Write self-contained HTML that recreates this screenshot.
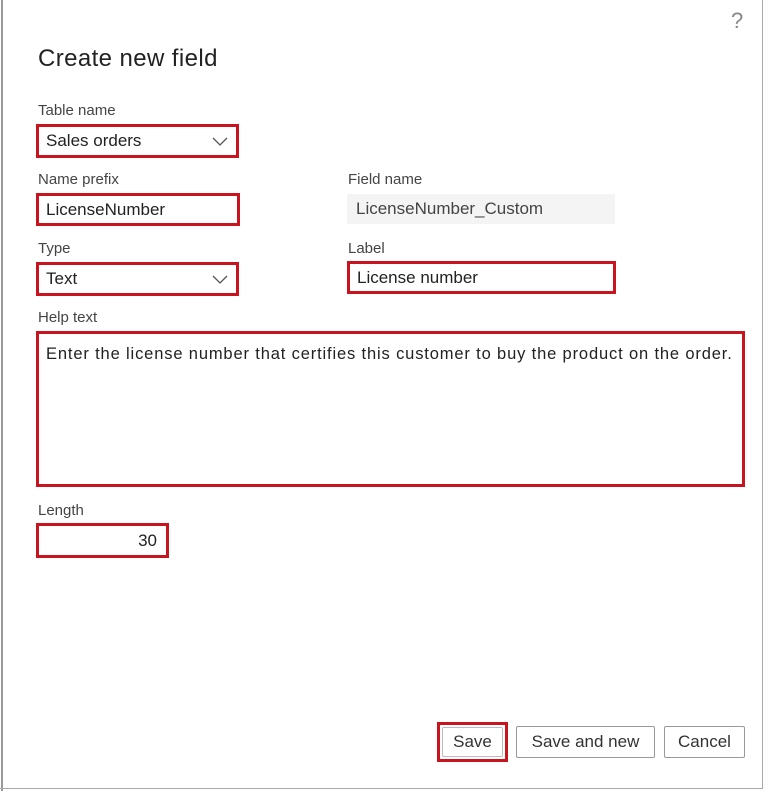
<!DOCTYPE html>
<html><head><style>
body{margin:0;width:768px;height:791px;background:#fff;font-family:"Liberation Sans",sans-serif;color:#222;position:relative;overflow:hidden}
.a{position:absolute}
.lbl{font-size:15px;color:#444}
.box{position:absolute;border:3px solid #c8141e;box-sizing:border-box;font-size:17px;color:#222;padding-left:7px;display:flex;align-items:center}
.chev{position:absolute;right:8px;top:7px}
.btn{position:absolute;border:1px solid #999;border-radius:2px;box-sizing:border-box;font-size:17px;display:flex;align-items:center;justify-content:center;color:#333;background:#fff}
</style></head><body>
<div class="a" style="left:1px;top:0;width:2px;height:791px;background:#999"></div>
<div class="a" style="left:762px;top:0;width:1px;height:789px;background:#aaa"></div>
<div class="a" style="left:0;top:788px;width:763px;height:1px;background:#aaa"></div>
<div class="a" style="left:731px;top:8px;font-size:22px;color:#888">?</div>
<div class="a" style="left:38px;top:45px;font-size:24px;letter-spacing:0.4px;color:#222">Create new field</div>

<div class="a lbl" style="left:38px;top:102px">Table name</div>
<div class="box" style="left:36px;top:124px;width:203px;height:34px">Sales orders<svg class="chev" width="16" height="14" viewBox="0 0 16 14"><path d="M1 4l7 7 7-7" fill="none" stroke="#555" stroke-width="1.3"/></svg></div>

<div class="a lbl" style="left:38px;top:171px">Name prefix</div>
<div class="box" style="left:36px;top:193px;width:204px;height:33px">LicenseNumber</div>
<div class="a lbl" style="left:348px;top:171px">Field name</div>
<div class="a" style="left:347px;top:194px;width:268px;height:30px;background:#f4f4f4;font-size:17px;color:#444;padding-left:9px;box-sizing:border-box;line-height:30px">LicenseNumber_Custom</div>

<div class="a lbl" style="left:38px;top:240px">Type</div>
<div class="box" style="left:36px;top:262px;width:203px;height:34px">Text<svg class="chev" width="16" height="14" viewBox="0 0 16 14"><path d="M1 4l7 7 7-7" fill="none" stroke="#555" stroke-width="1.3"/></svg></div>
<div class="a lbl" style="left:348px;top:240px">Label</div>
<div class="box" style="left:347px;top:261px;width:269px;height:33px">License number</div>

<div class="a lbl" style="left:38px;top:309px">Help text</div>
<div class="box" style="left:36px;top:331px;width:709px;height:156px;align-items:flex-start;padding-top:11px;font-size:16.5px;letter-spacing:0.85px;white-space:nowrap">Enter the license number that certifies this customer to buy the product on the order.</div>

<div class="a lbl" style="left:38px;top:502px">Length</div>
<div class="box" style="left:36px;top:523px;width:133px;height:35px;justify-content:flex-end;padding-right:9px">30</div>

<div class="box" style="left:437px;top:722px;width:71px;height:40px;padding:0;justify-content:center"><div class="btn" style="position:static;width:61px;height:30px;border-color:#bbb">Save</div></div>
<div class="btn" style="left:516px;top:726px;width:139px;height:32px">Save and new</div>
<div class="btn" style="left:664px;top:726px;width:81px;height:32px">Cancel</div>
</body></html>
